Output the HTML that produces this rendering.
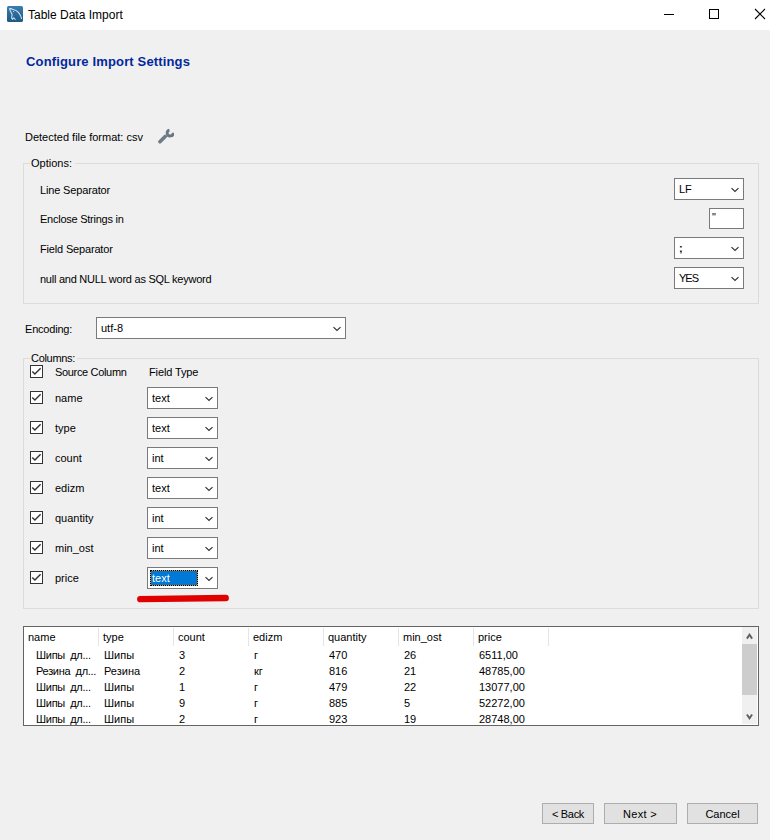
<!DOCTYPE html>
<html><head><meta charset="utf-8">
<style>
html,body{margin:0;padding:0}
body{width:770px;height:840px;position:relative;overflow:hidden;background:#f0f0f0;font-family:"Liberation Sans",sans-serif;font-size:11px;color:#000}
.a{position:absolute}
.t{position:absolute;white-space:pre;font-size:11px;line-height:13px}
.title{position:absolute;left:0;top:0;width:770px;height:30px;background:#fff}
.grp{position:absolute;border:1px solid #dcdcdc;box-sizing:border-box}
.lbl{position:absolute;background:#f0f0f0;padding:0 1px;white-space:pre;line-height:13px}
.cb{position:absolute;width:13px;height:13px;box-sizing:border-box;border:1px solid #333;background:#fff}
.combo{position:absolute;box-sizing:border-box;border:1px solid #7a7a7a;background:#fff;height:22px}
.combo .v{position:absolute;left:4px;top:4px;line-height:13px;white-space:pre}
.chev{position:absolute;overflow:visible}
.btn{position:absolute;box-sizing:border-box;border:1px solid #adadad;background:#e1e1e1;height:21px;text-align:center;line-height:20px;white-space:pre}
.tbl{position:absolute;left:23px;top:626px;width:736px;height:100px;box-sizing:border-box;border:1px solid #646464;background:#fff;overflow:hidden}
.hsep{position:absolute;top:1px;width:1px;height:18px;background:#e5e5e5}
</style></head><body>
<div class="title"></div>
<svg class="a" style="left:7px;top:6px" width="16" height="16" viewBox="0 0 16 16">
<defs><linearGradient id="ig" x1="0" y1="0" x2="0" y2="1"><stop offset="0" stop-color="#3a7db0"/><stop offset="1" stop-color="#1d5a86"/></linearGradient></defs>
<rect x="0" y="0" width="16" height="16" rx="1.6" fill="url(#ig)"/>
<path d="M2.6 2.6 L4.4 2.6 Q5 3.3 6.2 3.5 Q9.5 4.2 11.6 6.6 Q13.6 9 14.6 12.6 M2.6 3 Q3.2 4.5 3.8 5.8 Q4.5 7.3 5.2 9 Q4.4 10.6 4.8 12.4 L5.6 13.4 Q6.2 12 6.8 11.8 Q7.4 12.6 7.9 13.1" stroke="#d3e0ea" stroke-width="1.05" fill="none" stroke-linecap="round" stroke-linejoin="round"/><circle cx="6.5" cy="5.6" r="0.6" fill="#c5d6e3"/><circle cx="8.7" cy="13.5" r="0.5" fill="#b0c6d8"/>
</svg>
<div class="t" style="left:28px;top:8px;font-size:12px;line-height:15px">Table Data Import</div>
<div class="a" style="left:664px;top:14px;width:10px;height:1px;background:#000"></div>
<div class="a" style="left:709px;top:9px;width:10px;height:10px;box-sizing:border-box;border:1px solid #000"></div>
<svg class="a" style="left:754px;top:8px" width="12" height="12" viewBox="0 0 12 12"><path d="M1 1 L11 11 M11 1 L1 11" stroke="#000" stroke-width="1.1"/></svg>
<div class="t" style="left:26px;top:54px;font-size:13px;line-height:15px;font-weight:bold;color:#03289c;letter-spacing:0.15px">Configure Import Settings</div>
<div class="t" style="left:25px;top:131px;">Detected file format: csv</div>
<svg class="a" style="left:157px;top:128px" width="17" height="17" viewBox="0 0 17 17">
<path d="M2.9 13.7 L8.2 8.4" stroke="#6f7a87" stroke-width="3.6" stroke-linecap="round"/>
<path d="M12.42 2.1 A3.0 3.0 0 1 0 16.19 4.74" stroke="#6b7683" stroke-width="2.8" fill="none"/>
</svg>
<div class="grp" style="left:23px;top:163px;width:736px;height:141px"></div>
<div class="lbl" style="left:30px;top:157px;padding-right:3px">Options:</div>
<div class="t" style="left:40px;top:184px;letter-spacing:-0.15px">Line Separator</div>
<div class="t" style="left:40px;top:213px;letter-spacing:-0.25px">Enclose Strings in</div>
<div class="t" style="left:40px;top:243px;letter-spacing:-0.17px">Field Separator</div>
<div class="t" style="left:40px;top:273px;letter-spacing:-0.25px">null and NULL word as SQL keyword</div>
<div class="combo" style="left:674px;top:178px;width:70px;height:22px"><span class="v">LF</span></div><svg class="chev" style="left:730px;top:187px" width="10" height="7" viewBox="0 0 10 7"><path d="M1.5 1.1 L5 4.5 L8.5 1.1" stroke="#333" stroke-width="1.2" fill="none"/></svg>
<div class="combo" style="left:709px;top:208px;width:35px;height:21px"><span class="v" style="left:2px;top:2px">"</span></div>
<div class="combo" style="left:674px;top:237px;width:70px;height:22px"><span class="v"><b style="font-weight:bold">;</b></span></div><svg class="chev" style="left:730px;top:246px" width="10" height="7" viewBox="0 0 10 7"><path d="M1.5 1.1 L5 4.5 L8.5 1.1" stroke="#333" stroke-width="1.2" fill="none"/></svg>
<div class="combo" style="left:674px;top:267px;width:70px;height:22px"><span class="v"><span style="letter-spacing:-1px">YES</span></span></div><svg class="chev" style="left:730px;top:276px" width="10" height="7" viewBox="0 0 10 7"><path d="M1.5 1.1 L5 4.5 L8.5 1.1" stroke="#333" stroke-width="1.2" fill="none"/></svg>
<div class="t" style="left:25px;top:323px;letter-spacing:-0.2px">Encoding:</div>
<div class="combo" style="left:96px;top:317px;width:250px;height:22px"><span class="v">utf-8</span></div><svg class="chev" style="left:332px;top:326px" width="10" height="7" viewBox="0 0 10 7"><path d="M1.5 1.1 L5 4.5 L8.5 1.1" stroke="#333" stroke-width="1.2" fill="none"/></svg>
<div class="grp" style="left:23px;top:358px;width:736px;height:251px"></div>
<div class="lbl" style="left:30px;top:352px;padding-right:2px;letter-spacing:-0.3px">Columns:</div>
<div class="cb" style="left:30px;top:365px"><svg width="13" height="13" viewBox="0 0 13 13" style="position:absolute;left:-1px;top:-1px"><path d="M2.3 6.4 L4.9 9.1 L10.6 3.3" stroke="#333" stroke-width="1.4" fill="none"/></svg></div>
<div class="t" style="left:55px;top:366px;letter-spacing:-0.33px">Source Column</div>
<div class="t" style="left:149px;top:366px;letter-spacing:-0.12px">Field Type</div>
<div class="cb" style="left:30px;top:391px"><svg width="13" height="13" viewBox="0 0 13 13" style="position:absolute;left:-1px;top:-1px"><path d="M2.3 6.4 L4.9 9.1 L10.6 3.3" stroke="#333" stroke-width="1.4" fill="none"/></svg></div>
<div class="t" style="left:55px;top:392px;">name</div>
<div class="combo" style="left:147px;top:387px;width:71px;height:22px"><span class="v">text</span></div><svg class="chev" style="left:204px;top:396px" width="10" height="7" viewBox="0 0 10 7"><path d="M1.5 1.1 L5 4.5 L8.5 1.1" stroke="#333" stroke-width="1.2" fill="none"/></svg>
<div class="cb" style="left:30px;top:421px"><svg width="13" height="13" viewBox="0 0 13 13" style="position:absolute;left:-1px;top:-1px"><path d="M2.3 6.4 L4.9 9.1 L10.6 3.3" stroke="#333" stroke-width="1.4" fill="none"/></svg></div>
<div class="t" style="left:55px;top:422px;">type</div>
<div class="combo" style="left:147px;top:417px;width:71px;height:22px"><span class="v">text</span></div><svg class="chev" style="left:204px;top:426px" width="10" height="7" viewBox="0 0 10 7"><path d="M1.5 1.1 L5 4.5 L8.5 1.1" stroke="#333" stroke-width="1.2" fill="none"/></svg>
<div class="cb" style="left:30px;top:451px"><svg width="13" height="13" viewBox="0 0 13 13" style="position:absolute;left:-1px;top:-1px"><path d="M2.3 6.4 L4.9 9.1 L10.6 3.3" stroke="#333" stroke-width="1.4" fill="none"/></svg></div>
<div class="t" style="left:55px;top:452px;">count</div>
<div class="combo" style="left:147px;top:447px;width:71px;height:22px"><span class="v">int</span></div><svg class="chev" style="left:204px;top:456px" width="10" height="7" viewBox="0 0 10 7"><path d="M1.5 1.1 L5 4.5 L8.5 1.1" stroke="#333" stroke-width="1.2" fill="none"/></svg>
<div class="cb" style="left:30px;top:481px"><svg width="13" height="13" viewBox="0 0 13 13" style="position:absolute;left:-1px;top:-1px"><path d="M2.3 6.4 L4.9 9.1 L10.6 3.3" stroke="#333" stroke-width="1.4" fill="none"/></svg></div>
<div class="t" style="left:55px;top:482px;">edizm</div>
<div class="combo" style="left:147px;top:477px;width:71px;height:22px"><span class="v">text</span></div><svg class="chev" style="left:204px;top:486px" width="10" height="7" viewBox="0 0 10 7"><path d="M1.5 1.1 L5 4.5 L8.5 1.1" stroke="#333" stroke-width="1.2" fill="none"/></svg>
<div class="cb" style="left:30px;top:511px"><svg width="13" height="13" viewBox="0 0 13 13" style="position:absolute;left:-1px;top:-1px"><path d="M2.3 6.4 L4.9 9.1 L10.6 3.3" stroke="#333" stroke-width="1.4" fill="none"/></svg></div>
<div class="t" style="left:55px;top:512px;">quantity</div>
<div class="combo" style="left:147px;top:507px;width:71px;height:22px"><span class="v">int</span></div><svg class="chev" style="left:204px;top:516px" width="10" height="7" viewBox="0 0 10 7"><path d="M1.5 1.1 L5 4.5 L8.5 1.1" stroke="#333" stroke-width="1.2" fill="none"/></svg>
<div class="cb" style="left:30px;top:541px"><svg width="13" height="13" viewBox="0 0 13 13" style="position:absolute;left:-1px;top:-1px"><path d="M2.3 6.4 L4.9 9.1 L10.6 3.3" stroke="#333" stroke-width="1.4" fill="none"/></svg></div>
<div class="t" style="left:55px;top:542px;">min_ost</div>
<div class="combo" style="left:147px;top:537px;width:71px;height:22px"><span class="v">int</span></div><svg class="chev" style="left:204px;top:546px" width="10" height="7" viewBox="0 0 10 7"><path d="M1.5 1.1 L5 4.5 L8.5 1.1" stroke="#333" stroke-width="1.2" fill="none"/></svg>
<div class="cb" style="left:30px;top:571px"><svg width="13" height="13" viewBox="0 0 13 13" style="position:absolute;left:-1px;top:-1px"><path d="M2.3 6.4 L4.9 9.1 L10.6 3.3" stroke="#333" stroke-width="1.4" fill="none"/></svg></div>
<div class="t" style="left:55px;top:572px;">price</div>
<div class="combo" style="left:147px;top:567px;width:71px;height:22px"><div class="a" style="left:2px;top:2px;width:48px;height:16px;background:#f39a2b"><div class="a" style="left:0;top:0;width:48px;height:16px;background:#0078d7;background-clip:padding-box;box-sizing:border-box;border:1px dotted #000"></div></div><span class="v"><span style="color:#fff">text</span></span></div><svg class="chev" style="left:204px;top:576px" width="10" height="7" viewBox="0 0 10 7"><path d="M1.5 1.1 L5 4.5 L8.5 1.1" stroke="#333" stroke-width="1.2" fill="none"/></svg>
<svg class="a" style="left:130px;top:588px" width="110" height="20" viewBox="0 0 110 20"><path d="M10.3 11.1 L95.7 10" stroke="#e00000" stroke-width="6.4" stroke-linecap="round"/></svg>
<div class="tbl"><div class="t" style="left:4px;top:4px">name</div><div class="hsep" style="left:74px"></div><div class="t" style="left:79px;top:4px">type</div><div class="hsep" style="left:149px"></div><div class="t" style="left:154px;top:4px">count</div><div class="hsep" style="left:224px"></div><div class="t" style="left:229px;top:4px">edizm</div><div class="hsep" style="left:299px"></div><div class="t" style="left:304px;top:4px">quantity</div><div class="hsep" style="left:374px"></div><div class="t" style="left:379px;top:4px">min_ost</div><div class="hsep" style="left:449px"></div><div class="t" style="left:454px;top:4px">price</div><div class="hsep" style="left:524px"></div><div class="t" style="left:12px;top:22px;letter-spacing:-0.3px;word-spacing:2.5px">Шипы дл...</div><div class="t" style="left:80px;top:22px">Шипы</div><div class="t" style="left:155px;top:22px">3</div><div class="t" style="left:230px;top:22px">г</div><div class="t" style="left:305px;top:22px">470</div><div class="t" style="left:380px;top:22px">26</div><div class="t" style="left:455px;top:22px">6511,00</div><div class="t" style="left:12px;top:38px;letter-spacing:-0.3px;word-spacing:2.5px">Резина дл...</div><div class="t" style="left:80px;top:38px">Резина</div><div class="t" style="left:155px;top:38px">2</div><div class="t" style="left:230px;top:38px">кг</div><div class="t" style="left:305px;top:38px">816</div><div class="t" style="left:380px;top:38px">21</div><div class="t" style="left:455px;top:38px">48785,00</div><div class="t" style="left:12px;top:54px;letter-spacing:-0.3px;word-spacing:2.5px">Шипы дл...</div><div class="t" style="left:80px;top:54px">Шипы</div><div class="t" style="left:155px;top:54px">1</div><div class="t" style="left:230px;top:54px">г</div><div class="t" style="left:305px;top:54px">479</div><div class="t" style="left:380px;top:54px">22</div><div class="t" style="left:455px;top:54px">13077,00</div><div class="t" style="left:12px;top:70px;letter-spacing:-0.3px;word-spacing:2.5px">Шипы дл...</div><div class="t" style="left:80px;top:70px">Шипы</div><div class="t" style="left:155px;top:70px">9</div><div class="t" style="left:230px;top:70px">г</div><div class="t" style="left:305px;top:70px">885</div><div class="t" style="left:380px;top:70px">5</div><div class="t" style="left:455px;top:70px">52272,00</div><div class="t" style="left:12px;top:86px;letter-spacing:-0.3px;word-spacing:2.5px">Шипы дл...</div><div class="t" style="left:80px;top:86px">Шипы</div><div class="t" style="left:155px;top:86px">2</div><div class="t" style="left:230px;top:86px">г</div><div class="t" style="left:305px;top:86px">923</div><div class="t" style="left:380px;top:86px">19</div><div class="t" style="left:455px;top:86px">28748,00</div><div class="a" style="left:718px;top:0px;width:15px;height:97px;background:#f0f0f0"></div><div class="a" style="left:718px;top:17px;width:15px;height:51px;background:#cdcdcd"></div><svg class="a" style="left:722px;top:6px" width="8" height="7" viewBox="0 0 8 7"><path d="M0.9 5.6 L3.5 1.7 L6.1 5.6" stroke="#606060" stroke-width="1.9" fill="none"/></svg><svg class="a" style="left:722px;top:86px" width="8" height="8" viewBox="0 0 8 8"><path d="M0.9 1.5 L3.5 5.4 L6.1 1.5" stroke="#606060" stroke-width="1.9" fill="none"/></svg></div>
<div class="btn" style="left:542px;top:803px;width:52px;letter-spacing:-0.3px">&lt; Back</div>
<div class="btn" style="left:604px;top:803px;width:73px;letter-spacing:0.3px;text-indent:-1px">Next &gt;</div>
<div class="btn" style="left:687px;top:803px;width:71px">Cancel</div>
</body></html>
